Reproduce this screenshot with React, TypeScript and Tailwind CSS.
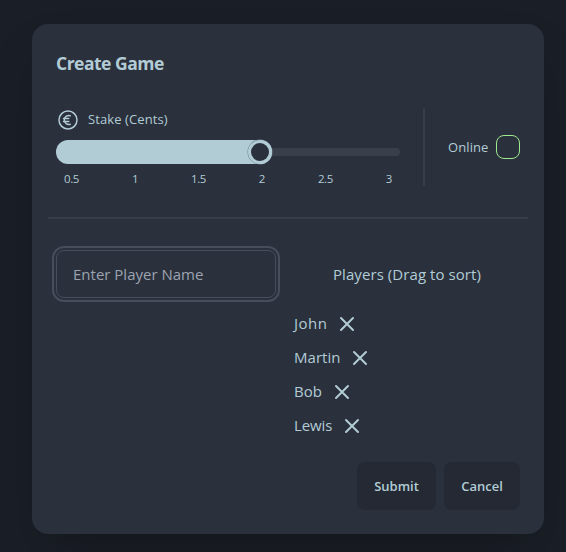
import React from "react";

const stakes = ["0.5", "1", "1.5", "2", "2.5", "3"];

const players = [
  { name: "John", width: "w-[34px] tracking-[0.5px]" },
  { name: "Martin", width: "w-[47px] tracking-[0.05px]" },
  { name: "Bob", width: "w-[29px]" },
  { name: "Lewis", width: "w-[39px] tracking-[-0.1px]" },
];

function EuroIcon() {
  return (
    <svg className="h-6 w-6" viewBox="0 0 24 24" fill="none" stroke="currentColor" strokeWidth="1.5" strokeLinecap="round" strokeLinejoin="round">
      <path d="M14.25 7.756a4.5 4.5 0 1 0 0 8.488M7.5 10.5h5.25m-5.25 3h5.25M21 12a9 9 0 1 1-18 0 9 9 0 0 1 18 0Z" />
    </svg>
  );
}

function CloseIcon() {
  return (
    <svg className="h-6 w-6" viewBox="0 0 24 24" fill="none" stroke="currentColor" strokeWidth="2" strokeLinecap="round" strokeLinejoin="round">
      <path d="M6 18 18 6M6 6l12 12" />
    </svg>
  );
}

function StakeSlider() {
  return (
    <div className="relative flex h-6 w-[344px] items-center">
      <div className="h-2 w-full rounded-full bg-[#3a404b]" />
      <div className="absolute left-0 top-0 h-6 w-[206px] rounded-l-full bg-[#b2ccd6]" />
      <div className="absolute left-[192px] top-0 h-6 w-6 rounded-full border-[3px] border-[#b2ccd6] bg-[#2a303c] shadow-[0_0_0_0.5px_#71838e]" />
      <div className="absolute left-[204px] top-0 h-6 w-3 rounded-r-full border-y-[3px] border-r-[3px] border-[#b2ccd6] bg-[#2a303c]" />
    </div>
  );
}

export default function App() {
  return (
    <div className="h-[552px] w-[566px] overflow-hidden bg-[#1a1e26] px-8 pt-6 font-['Open_Sans','Noto_Sans',sans-serif] text-[#b2ccd6]">
      <div className="flex h-[510px] w-[512px] flex-col rounded-2xl bg-[#2a303c] p-6 shadow-[0_25px_50px_-12px_rgba(0,0,0,0.25)]">
        <h3 className="h-7 whitespace-nowrap pt-px text-[17.5px] font-bold leading-7 tracking-[-0.5px]">Create Game</h3>

        <div className="mt-8 flex h-[78px]">
          <div className="w-[344px]">
            <div className="flex h-6 items-center gap-2">
              <EuroIcon />
              <span className="whitespace-nowrap text-[13px] tracking-[0.1px]">Stake (Cents)</span>
            </div>
            <div className="mt-2">
              <StakeSlider />
            </div>
            <div className="mt-1.5 flex h-4 justify-between px-2 text-[11.5px] leading-[17px] tracking-[-0.4px]">
              {stakes.map((value) => (
                <span key={value}>{value}</span>
              ))}
            </div>
          </div>
          <div className="ml-[23px] w-0.5 bg-[#383e49]" />
          <label className="ml-[23px] flex items-center">
            <span className="w-12 whitespace-nowrap pt-0.5 text-[13px] tracking-[0.1px]">Online</span>
            <span className="h-6 w-6 rounded-lg border border-[#9fe88d]" />
          </label>
        </div>

        <div className="-mx-2 mt-[31px] h-0.5 bg-[#383e49]" />

        <div className="mt-[31px] flex h-48">
          <input
            className="h-12 w-[220px] rounded-lg border border-[#474e5b] bg-transparent px-4 text-[15px] outline-2 outline-offset-2 outline-[#474e5b] placeholder:text-[#9ca3af]"
            placeholder="Enter Player Name"
          />
          <div className="ml-[18px] w-[226px]">
            <div className="flex h-12 items-center justify-center whitespace-nowrap text-[15px] tracking-[0.07px]">Players (Drag to sort)</div>
            <ul className="mt-[9px]">
              {players.map((player) => (
                <li key={player.name} className="flex h-[34px] items-center text-[15px]">
                  <span className={player.width + " whitespace-nowrap pb-0.5"}>{player.name}</span>
                  <button className="ml-[7px]">
                    <CloseIcon />
                  </button>
                </li>
              ))}
            </ul>
          </div>
        </div>

        <div className="mt-5 flex justify-end gap-2 text-[13px] font-semibold">
          <button className="h-12 w-[79px] rounded-lg bg-[#242933] pt-0.5">Submit</button>
          <button className="h-12 w-[76px] rounded-lg bg-[#242933] pt-0.5">Cancel</button>
        </div>
      </div>
    </div>
  );
}
